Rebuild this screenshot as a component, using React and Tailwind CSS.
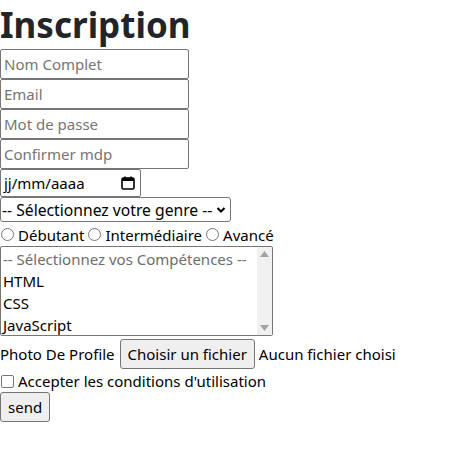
import { useState } from "react";

const font = "font-['Segoe_UI','Noto_Sans',sans-serif]";

function TextField({ placeholder, type = "text" }) {
  return (
    <input
      className="block h-[30px] w-[189px] rounded-[2px] border border-[#767676] bg-white px-[3px] text-[15px] text-black outline-none placeholder:text-[#757575]"
      placeholder={placeholder}
      type={type}
    />
  );
}

function Radio({ label }) {
  return (
    <label className="flex items-center whitespace-nowrap">
      <span className="mr-[4px] ml-[1px] h-[13px] w-[13px] rounded-full border border-[#767676] bg-white" />
      <span className="mr-[3px]">{label}</span>
    </label>
  );
}

export default function App() {
  const [accepted, setAccepted] = useState(false);

  return (
    <main className={`${font} min-h-screen bg-white text-[15px] leading-[22px] text-black`}>
      <h1 className="text-[35px] font-bold leading-[49px] text-[#212529]">Inscription</h1>
      <form className="flex flex-col items-start">
        <TextField placeholder="Nom Complet" />
        <TextField placeholder="Email" type="email" />
        <TextField placeholder="Mot de passe" type="password" />
        <TextField placeholder="Confirmer mdp" type="password" />

        <div className="flex h-[28px] w-[141px] items-center justify-between rounded-[2px] border border-[#767676] pl-[3px] pr-[5px]">
          <span>jj/mm/aaaa</span>
          <svg width="14" height="14" viewBox="0 0 14 14" fill="none">
            <rect x="1" y="2" width="12" height="11" rx="1.5" stroke="#000" strokeWidth="1.6" />
            <rect x="1" y="2" width="12" height="3" fill="#000" />
            <path d="M4 0.5v2.5M10 0.5v2.5" stroke="#000" strokeWidth="1.6" />
          </svg>
        </div>

        <div className="flex h-[25px] w-[231px] items-center justify-between whitespace-nowrap rounded-[3px] border border-[#767676] pl-[1px] pr-[4px] text-[15.7px]">
          <span>-- Sélectionnez votre genre --</span>
          <svg width="10" height="8" viewBox="0 0 10 8" fill="none">
            <path d="M1.5 2l3.5 3.5L8.5 2" stroke="#000" strokeWidth="2" />
          </svg>
        </div>

        <div className="flex h-[24px] items-center pt-[1px]">
          <Radio label="Débutant" />
          <Radio label="Intermédiaire" />
          <Radio label="Avancé" />
        </div>

        <div className="flex h-[90px] w-[273px] rounded-[2px] border border-[#767676]">
          <ul className="flex-1 whitespace-nowrap pl-[2px] pt-[1px] leading-[22px]">
            <li className="text-[#6d6d6d]">-- Sélectionnez vos Compétences --</li>
            <li>HTML</li>
            <li>CSS</li>
            <li>JavaScript</li>
          </ul>
          <div className="flex w-[15px] flex-col items-center justify-between bg-[#f1f1f1] py-[4px]">
            <svg width="9" height="6" viewBox="0 0 9 6"><path d="M0 6L4.5 0L9 6z" fill="#a3a3a3" /></svg>
            <svg width="9" height="6" viewBox="0 0 9 6"><path d="M0 0L4.5 6L9 0z" fill="#a3a3a3" /></svg>
          </div>
        </div>

        <div className="mt-[2px] flex h-[32px] items-center whitespace-nowrap">
          <span>Photo De Profile</span>
          <button className="ml-[5px] h-[30px] rounded-[3px] border border-[#767676] bg-[#efefef] px-[7px]" type="button">
            Choisir un fichier
          </button>
          <span className="ml-[4px]">Aucun fichier choisi</span>
        </div>

        <label className="flex h-[22px] items-center whitespace-nowrap">
          <span
            className={`ml-[1px] mr-[4px] h-[13px] w-[13px] rounded-[2px] border border-[#767676] ${accepted ? "bg-[#0075ff]" : "bg-white"}`}
            onClick={() => setAccepted(!accepted)}
          />
          <span>Accepter les conditions d'utilisation</span>
        </label>

        <button className="h-[30px] rounded-[3px] border border-[#767676] bg-[#efefef] px-[7px]" type="submit">
          send
        </button>
      </form>
    </main>
  );
}
